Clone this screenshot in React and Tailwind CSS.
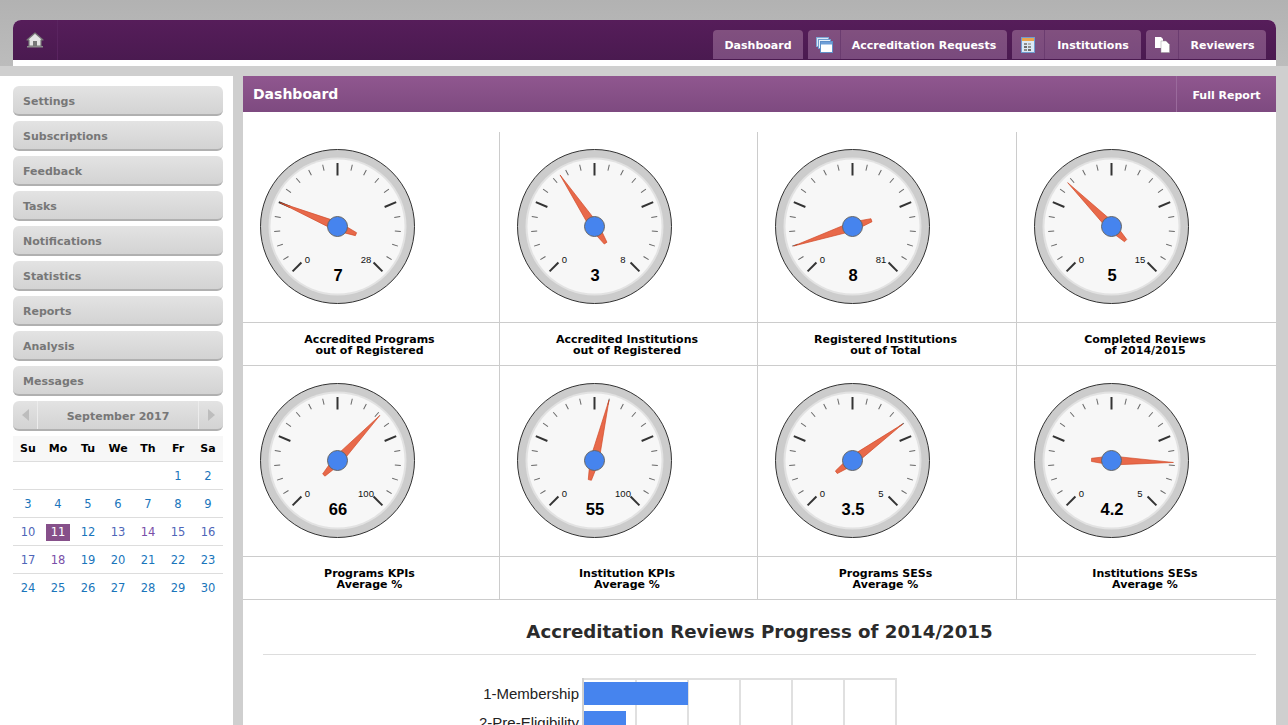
const sans = "font-['DejaVu_Sans',sans-serif]";

const menu = ["Settings","Subscriptions","Feedback","Tasks","Notifications","Statistics","Reports","Analysis","Messages"];
const days = ["Su","Mo","Tu","We","Th","Fr","Sa"];
const weeks = [
  ["","","","","",1,2],
  [3,4,5,6,7,8,9],
  [10,11,12,13,14,15,16],
  [17,18,19,20,21,22,23],
  [24,25,26,27,28,29,30],
];
const gauges = [
  { v: 7, max: 28, a: "Accredited Programs", b: "out of Registered" },
  { v: 3, max: 8, a: "Accredited Institutions", b: "out of Registered" },
  { v: 8, max: 81, a: "Registered Institutions", b: "out of Total" },
  { v: 5, max: 15, a: "Completed Reviews", b: "of 2014/2015" },
  { v: 66, max: 100, a: "Programs KPIs", b: "Average %" },
  { v: 55, max: 100, a: "Institution KPIs", b: "Average %" },
  { v: 3.5, max: 5, a: "Programs SESs", b: "Average %" },
  { v: 4.2, max: 5, a: "Institutions SESs", b: "Average %" },
];

function dayColor(d) {
  if (d === 14 || d === 18) return "text-[#7a4fa8]";
  if (d === 10 || d === 13 || d === 15 || d === 16 || d === 17) return "text-[#4f66b8]";
  return "text-[#1a75bb]";
}

function Gauge({ v, max }) {
  const c = 94.5;
  const ticks = [];
  for (let i = 0; i <= 20; i++) {
    const major = i % 5 === 0;
    ticks.push(
      <line
        key={i}
        x1={c}
        x2={c}
        y1={c - 63.5}
        y2={c - (major ? 51 : 57.5)}
        stroke={major ? "#333" : "#666"}
        strokeWidth={major ? 2 : 1}
        transform={`rotate(${-135 + i * 13.5} ${c} ${c})`}
      />
    );
  }
  const angle = -135 + (v / max) * 270;
  return (
    <svg width="190" height="190" viewBox="0 0 190 190" className="block">
      <circle cx={c} cy={c} r="77" fill="#ccc" stroke="#333" strokeWidth="1" />
      <circle cx={c} cy={c} r="69" fill="#e2e2e2" />
      <circle cx={c} cy={c} r="67" fill="#f7f7f7" />
      {ticks}
      <text x={c - 30} y={c + 36} fontSize="9.5" textAnchor="middle" fontFamily="Liberation Sans, sans-serif" fill="#111">0</text>
      <text x={c + 28.5} y={c + 36} fontSize="9.5" textAnchor="middle" fontFamily="Liberation Sans, sans-serif" fill="#111">{max}</text>
      <text x={c + 0.5} y={c + 54} fontSize="16.5" fontWeight="700" textAnchor="middle" fontFamily="Liberation Sans, sans-serif" fill="#000">{v}</text>
      <g transform={`rotate(${angle} ${c} ${c})`}>
        <polygon
          points={`${c},${c - 62} ${c + 4.5},${c} ${c + 1.6},${c + 20} ${c - 1.6},${c + 20} ${c - 4.5},${c}`}
          fill="#e8694a"
          stroke="#cf4522"
          strokeWidth="0.6"
        />
      </g>
      <circle cx={c} cy={c} r="10" fill="#4684ee" stroke="#666" strokeWidth="1" />
    </svg>
  );
}

const HomeIcon = () => (
  <svg width="18" height="16" viewBox="0 0 18 16">
    <path d="M9 1 L17 8 L15 8 L15 14 L3 14 L3 8 L1 8 Z" fill="#e4e4e4" stroke="#777" strokeWidth="1.2" strokeLinejoin="round" />
    <rect x="7" y="9" width="4" height="5" fill="#777" />
    <rect x="1" y="14" width="16" height="1.5" fill="#8a8a8a" />
  </svg>
);
const WindowsIcon = () => (
  <svg width="17" height="16" viewBox="0 0 17 16">
    <rect x="0.5" y="0.5" width="12" height="9" fill="#dbe8f6" stroke="#7ea6d4" />
    <rect x="2.5" y="2.5" width="12" height="9" fill="#eaf2fa" stroke="#6f9ccf" />
    <rect x="4.5" y="4.5" width="12" height="11" fill="#ffffff" stroke="#5f8fc8" />
    <rect x="5" y="5" width="11" height="2.5" fill="#6f9fd8" />
  </svg>
);
const CalcIcon = () => (
  <svg width="14" height="16" viewBox="0 0 14 16">
    <rect x="0.5" y="0.5" width="13" height="15" fill="#dce8f5" stroke="#6f9ccf" />
    <rect x="1" y="1" width="12" height="3" fill="#e9a34e" />
    <rect x="3" y="6" width="3" height="2" fill="#8c8c8c" />
    <rect x="7" y="6" width="3" height="2" fill="#b3b3b3" />
    <rect x="3" y="9" width="3" height="2" fill="#6d6d6d" />
    <rect x="7" y="9" width="3" height="2" fill="#8c8c8c" />
    <rect x="3" y="12" width="3" height="2" fill="#8c8c8c" />
    <rect x="7" y="12" width="3" height="2" fill="#6d6d6d" />
  </svg>
);
const PagesIcon = () => (
  <svg width="15" height="16" viewBox="0 0 15 16">
    <path d="M0 0 H6 L8 2 V11 H0 Z" fill="#fff" />
    <path d="M6 4 H11 L14.5 7.5 V15.5 H6 Z" fill="#fff" stroke="#999" strokeWidth="0.5" />
  </svg>
);

function Tab({ icon, label, w }) {
  return (
    <div className={`flex h-[29px] rounded-t-[4px] bg-gradient-to-b from-[#81507f] to-[#794a7d] text-[#fff] font-bold text-[11px] ${w}`}>
      {icon && <div className="flex w-[33px] items-center justify-center border-r border-[#6b3c70]">{icon}</div>}
      <div className="flex flex-1 items-center justify-center pt-[4px]">{label}</div>
    </div>
  );
}

function Chart() {
  const lines = [636, 688, 740, 792, 844, 896];
  return (
    <svg width="1033" height="50" viewBox="0 0 1033 50" className="block">
      <g transform="translate(-243 -675)">
        <rect x="582" y="678" width="315" height="2" fill="#e0e0e0" />
        {lines.map((x) => <rect key={x} x={x - 1} y="678" width="2" height="50" fill="#e0e0e0" />)}
        <rect x="582" y="678" width="2" height="50" fill="#d0d0d0" />
        <rect x="584" y="682" width="104" height="23" fill="#4684ee" />
        <rect x="584" y="711" width="42" height="23" fill="#4684ee" />
        <text x="579" y="699" fontSize="15" textAnchor="end" fontFamily="Liberation Sans, sans-serif" fill="#222">1-Membership</text>
        <text x="579" y="728" fontSize="15" textAnchor="end" fontFamily="Liberation Sans, sans-serif" fill="#222">2-Pre-Eligibility</text>
      </g>
    </svg>
  );
}

export default function App() {
  return (
    <div className={`h-[725px] w-[1288px] overflow-hidden bg-[#cfcfcf] ${sans}`}>
      {/* top band */}
      <div className="h-[66px] bg-gradient-to-b from-[#b2b2b2] to-[#bcbcbc] pt-[20px] pr-[12px] pl-[13px]">
        <div className="h-[46px] rounded-t-[8px] bg-white">
          <div className="flex h-[40px] rounded-t-[8px] bg-gradient-to-b from-[#561d5a] to-[#4a1a50]">
            <div className="flex w-[45px] items-start justify-center border-r border-[#5a2460] pt-[12px]">
              <HomeIcon />
            </div>
            <div className="ml-auto flex items-end gap-[5px] pr-[10px] pb-[1px]">
              <Tab label="Dashboard" w="w-[90px]" />
              <Tab icon={<WindowsIcon />} label="Accreditation Requests" w="w-[199px]" />
              <Tab icon={<CalcIcon />} label="Institutions" w="w-[129px]" />
              <Tab icon={<PagesIcon />} label="Reviewers" w="w-[120px]" />
            </div>
          </div>
        </div>
      </div>

      <div className="mt-[10px] flex">
        {/* sidebar */}
        <aside className="h-[649px] w-[233px] bg-white pt-[10px] pr-[10px] pl-[13px]">
          <div className="flex flex-col gap-[5px]">
            {menu.map((m) => (
              <div key={m} className="flex h-[30px] items-center rounded-[6px] border-b-2 border-[#b0b0b0] bg-gradient-to-b from-[#e3e3e3] to-[#d3d3d3] pt-[4px] pl-[10px] text-[11px] font-bold text-[#777]">
                {m}
              </div>
            ))}
            <div className="flex h-[30px] items-center rounded-[6px] border-b-2 border-[#b0b0b0] bg-gradient-to-b from-[#e3e3e3] to-[#d3d3d3] text-[11px] font-bold text-[#777]">
              <div className="flex h-full w-[25px] items-center justify-center border-r border-[#ececec]">
                <div className="h-0 w-0 border-y-[6px] border-r-[7px] border-y-transparent border-r-[#bdbdbd]" />
              </div>
              <div className="flex-1 pt-[4px] text-center">September 2017</div>
              <div className="flex h-full w-[25px] items-center justify-center border-l border-[#ececec]">
                <div className="h-0 w-0 border-y-[6px] border-l-[7px] border-y-transparent border-l-[#bdbdbd]" />
              </div>
            </div>
          </div>
          <div className="mt-[5px]">
            <div className="grid h-[26px] grid-cols-7 border-b border-[#ddd] bg-[#f7f7f7] pt-[2px] text-[11px] font-bold text-black">
              {days.map((d) => <div key={d} className="flex items-center justify-center">{d}</div>)}
            </div>
            {weeks.map((w, i) => (
              <div key={i} className={`grid h-[28px] grid-cols-7 pt-[2px] text-[11.5px] ${i < 4 ? "border-b border-[#ddd]" : ""}`}>
                {w.map((d, j) => (
                  <div key={j} className={`flex items-center justify-center ${dayColor(d)}`}>
                    {d === 11 ? (
                      <span className="flex h-[17px] w-[24px] items-center justify-center bg-[#86508a] text-white">{d}</span>
                    ) : d}
                  </div>
                ))}
              </div>
            ))}
          </div>
        </aside>

        {/* main */}
        <main className="ml-[10px] h-[649px] w-[1033px] bg-white">
          <div className="flex h-[36px] items-center bg-gradient-to-b from-[#90578f] to-[#7e4a80] font-bold text-white">
            <div className="pt-[1px] pl-[10px] text-[14px]">Dashboard</div>
            <div className="ml-auto flex h-full w-[100px] items-center justify-center border-l border-[#9a6a9c] pt-[4px] text-[11px]">Full Report</div>
          </div>
          <div className="mt-[20px] grid grid-cols-[257px_258px_259px_259px]">
            {gauges.map((g, i) => (
              <div key={i} className={i % 4 < 3 ? "border-r border-[#ccc]" : ""}>
                <div className="h-[191px] border-b border-[#ccc]"><Gauge v={g.v} max={g.max} /></div>
                <div className="flex h-[43px] flex-col items-center justify-center border-b border-[#ccc] pt-[2px] pr-[3px] text-[11px] leading-[11px] font-bold text-black">
                  <div>{g.a}</div>
                  <div>{g.b}</div>
                </div>
              </div>
            ))}
          </div>
          <div className="mx-[20px] flex h-[55px] items-center justify-center border-b border-[#ddd] pt-[9px] text-[18.2px] font-bold text-[#2b2b2b]">
            Accreditation Reviews Progress of 2014/2015
          </div>
          <div className="mt-[20px]"><Chart /></div>
        </main>
      </div>
    </div>
  );
}
